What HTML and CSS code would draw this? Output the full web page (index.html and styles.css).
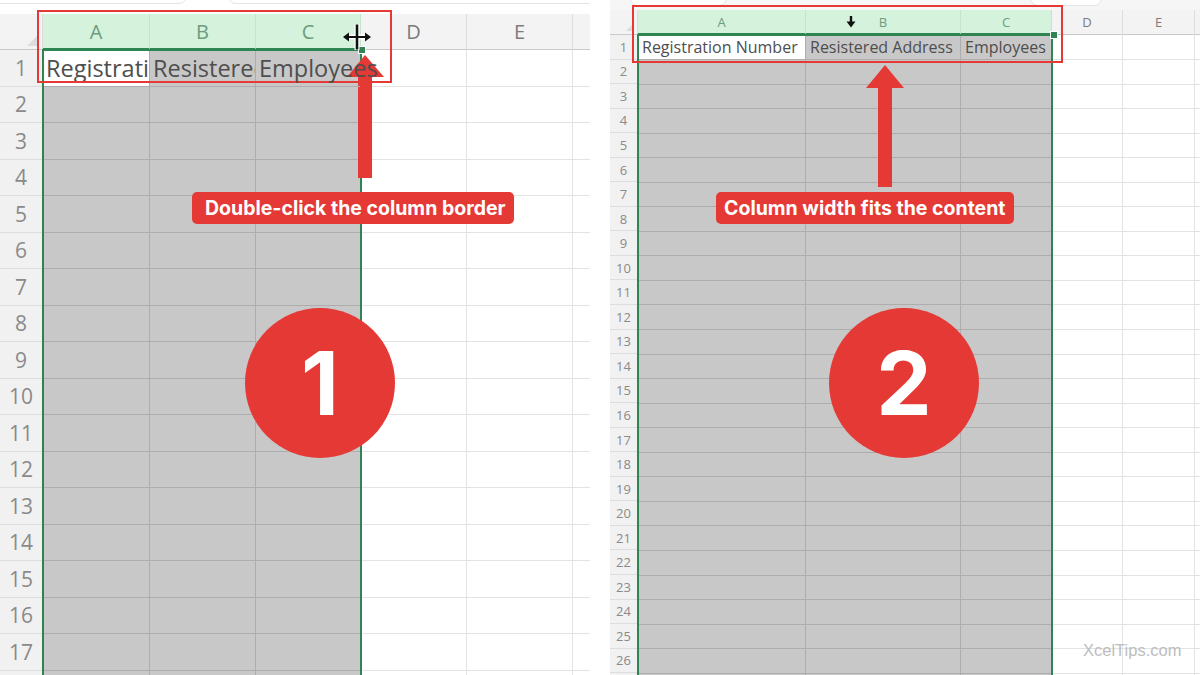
FILE: index.html
```html
<!DOCTYPE html>
<html>
<head>
<meta charset="utf-8">
<link rel="stylesheet" href="styles.css">
</head>
<body>
<div class="stage">
  <section class="panel p1">
    <div class="tabs"><span class="tab t1"></span><span class="tab t2"></span></div>
    <div class="hdr">
      <div class="corner"><span class="tri"></span></div>
      <div class="ch sel ca">A</div>
      <div class="ch sel cb">B</div>
      <div class="ch sel cc">C</div>
      <div class="ch cd">D</div>
      <div class="ch ce">E</div>
      <div class="ch cf"></div>
    </div>
    <div class="body">
      <div class="rn">
        <div>1</div><div>2</div><div>3</div><div>4</div><div>5</div><div>6</div>
        <div>7</div><div>8</div><div>9</div><div>10</div><div>11</div><div>12</div>
        <div>13</div><div>14</div><div>15</div><div>16</div><div>17</div><div>18</div>
      </div>
      <div class="grid">
        <div class="selgrp">
          <div class="col s ca"><div class="c1 active">Registration Number</div><div class="fill"></div></div>
          <div class="col s cb"><div class="c1">Resistered Address</div><div class="fill"></div></div>
          <div class="col s cc"><div class="c1 over">Employees</div><div class="fill"></div></div>
        </div>
        <div class="col cd"><div class="c1"></div><div class="fill"></div></div>
        <div class="col ce"><div class="c1"></div><div class="fill"></div></div>
        <div class="col cf"><div class="c1"></div><div class="fill"></div></div>
      </div>
    </div>

    <span class="handle h1"></span>
    <div class="redbox rb1"></div>
    <svg class="cursor-rs" width="30" height="28" viewBox="0 0 30 28">
      <g stroke="#fff" stroke-width="5" fill="#fff" stroke-linejoin="round">
        <line x1="15" y1="1" x2="15" y2="27"/>
        <line x1="4" y1="14" x2="26" y2="14"/>
      </g>
      <line x1="15" y1="1.5" x2="15" y2="26.5" stroke="#111" stroke-width="2.6"/>
      <line x1="6" y1="14" x2="24" y2="14" stroke="#111" stroke-width="2"/>
      <polygon points="1,14 7,9.5 7,18.5" fill="#111"/>
      <polygon points="29,14 23,9.5 23,18.5" fill="#111"/>
    </svg>
    <svg class="arrow ar1" width="40" height="126" viewBox="0 0 40 126">
      <polygon points="18,0 37,22 25,22 25,123 11,123 11,22 0,22" fill="#e53935"/>
    </svg>
    <div class="label lb1">Double-click the column border</div>
    <div class="badge bd1">1</div>
  </section>

  <section class="panel p2">
    <div class="tabs"><span class="tab t3"></span><span class="tab t4"></span></div>
    <div class="hdr">
      <div class="corner"><span class="tri"></span></div>
      <div class="ch sel ca">A</div>
      <div class="ch sel cb">B</div>
      <div class="ch sel cc">C</div>
      <div class="ch cd">D</div>
      <div class="ch ce">E</div>
      <div class="ch cf"></div>
    </div>
    <div class="body">
      <div class="rn">
        <div>1</div><div>2</div><div>3</div><div>4</div><div>5</div><div>6</div>
        <div>7</div><div>8</div><div>9</div><div>10</div><div>11</div><div>12</div>
        <div>13</div><div>14</div><div>15</div><div>16</div><div>17</div><div>18</div>
        <div>19</div><div>20</div><div>21</div><div>22</div><div>23</div><div>24</div>
        <div>25</div><div>26</div><div>27</div>
      </div>
      <div class="grid">
        <div class="selgrp">
          <div class="col s ca"><div class="c1 active">Registration Number</div><div class="fill"></div></div>
          <div class="col s cb"><div class="c1">Resistered Address</div><div class="fill"></div></div>
          <div class="col s cc"><div class="c1">Employees</div><div class="fill"></div></div>
        </div>
        <div class="col cd"><div class="c1"></div><div class="fill"></div></div>
        <div class="col ce"><div class="c1"></div><div class="fill"></div></div>
        <div class="col cf"><div class="c1"></div><div class="fill"></div></div>
      </div>
    </div>

    <span class="handle h2"></span>
    <div class="redbox rb2"></div>
    <svg class="cursor-dn" width="10" height="12" viewBox="0 0 10 12">
      <rect x="3.8" y="0" width="2.4" height="6.5" fill="#111"/>
      <polygon points="0.5,5.5 9.5,5.5 5,11.5" fill="#111"/>
    </svg>
    <svg class="arrow ar2" width="40" height="124" viewBox="0 0 40 124">
      <polygon points="19,0 38,23 26,23 26,122 12,122 12,23 0,23" fill="#e53935"/>
    </svg>
    <div class="label lb2">Column width fits the content</div>
    <div class="badge bd2">2</div>
    <div class="mark">XcelTips.com</div>
  </section>
</div>
</body>
</html>
```

FILE: styles.css
```css
html, body {
  margin: 0;
  padding: 0;
  background: #fff;
}
body {
  width: 1200px;
  height: 675px;
  overflow: hidden;
  font-family: "Open Sans", "Noto Sans", sans-serif;
}
.stage {
  display: flex;
  gap: 20px;
  width: 1200px;
  height: 675px;
}
.panel {
  position: relative;
  width: 590px;
  height: 675px;
  overflow: hidden;
  display: flex;
  flex-direction: column;
  flex: none;
}

/* panel metrics */
.p1 {
  --rw: 43px;
  --rh: 36.5px;
  --top: 14px;
  --hh: 36px;
  --hf: 20px;
  --cf: 23.5px;
  --nf: 21px;
}
.p2 {
  --rw: 28px;
  --rh: 24.55px;
  --top: 10px;
  --hh: 25px;
  --hf: 13px;
  --cf: 16px;
  --nf: 13px;
}
.p1 .ca { width: 107px; }
.p1 .cb { width: 106px; }
.p1 .cc { width: 105px; }
.p1 .cd { width: 106px; }
.p1 .ce { width: 106px; }
.p2 .ca { width: 168px; }
.p2 .cb { width: 155px; }
.p2 .cc { width: 91px; }
.p2 .cd { width: 71px; }
.p2 .ce { width: 72px; }
.cf { flex: 1; }

/* top tabs strip */
.tabs {
  height: var(--top);
  flex: none;
  position: relative;
}
.p2 .tabs { background: #f6f6f6; }
.tab {
  position: absolute;
  top: -14px;
  height: 16px;
  border: 1px solid #e4e4e4;
  border-radius: 8px;
  background: #fff;
}
.t1 { left: -10px; width: 195px; }
.t2 { left: 228px; width: 380px; }
.t3 { left: 20px; width: 95px; top: -12px; }
.t4 { left: 420px; width: 70px; top: -12px; }

/* column header */
.hdr {
  height: var(--hh);
  flex: none;
  display: flex;
  background: #f3f3f3;
}
.corner {
  width: var(--rw);
  flex: none;
  position: relative;
  box-sizing: border-box;
  border-bottom: 1px solid #c9c9c9;
  border-right: 1px solid #dcdcdc;
}
.tri {
  position: absolute;
  right: 3px;
  bottom: 3px;
  width: 0;
  height: 0;
  border-left: 12px solid transparent;
  border-bottom: 12px solid #dcdcdc;
}
.p2 .tri { border-left-width: 8px; border-bottom-width: 8px; }
.ch {
  flex: none;
  box-sizing: border-box;
  display: flex;
  align-items: center;
  justify-content: center;
  font-size: var(--hf);
  color: #7b7b7b;
  border-right: 1px solid #dedede;
  border-bottom: 1px solid #c9c9c9;
}
.ch.cf { flex: 1; border-right: none; }
.ch.sel {
  background: #d4f2dc;
  color: #6c9d7e;
  border-right-color: #c3e4cd;
  border-bottom: 2px solid #2f8552;
}

/* body */
.body {
  flex: 1;
  display: flex;
  min-height: 0;
}
.rn {
  width: var(--rw);
  flex: none;
  background: #f1f1f1;
  box-sizing: border-box;
  border-right: 1px solid #d6d6d6;
}
.rn div {
  height: var(--rh);
  box-sizing: border-box;
  border-bottom: 1px solid #dddddd;
  display: flex;
  align-items: center;
  justify-content: center;
  font-size: var(--nf);
  color: #8a8a8a;
}
.grid {
  flex: 1;
  display: flex;
  background: #fff;
}
.selgrp {
  display: flex;
  position: relative;
  flex: none;
}
.selgrp::after {
  content: "";
  position: absolute;
  left: -1px;
  top: -1px;
  right: -1px;
  bottom: 0;
  border: 2px solid #2f8552;
  border-bottom: none;
  pointer-events: none;
}
.col {
  --gl: #e3e3e3;
  display: flex;
  flex-direction: column;
  box-sizing: border-box;
  border-right: 1px solid var(--gl);
  flex: none;
}
.col.cf { flex: 1; border-right: none; }
.col.s {
  --gl: #adadad;
  background: #c8c8c8;
}
.c1 {
  height: var(--rh);
  flex: none;
  box-sizing: border-box;
  border-bottom: 1px solid var(--gl);
  font-size: var(--cf);
  line-height: var(--rh);
  color: #4e4e4e;
  white-space: nowrap;
  overflow: hidden;
  padding-left: 3px;
}
.p2 .c1 { padding-left: 4px; }
.c1.active { background: #fff; }
.c1.over { overflow: visible; position: relative; z-index: 1; }
.fill {
  flex: 1;
  background: repeating-linear-gradient(to bottom,
    transparent 0,
    transparent calc(var(--rh) - 1px),
    var(--gl) calc(var(--rh) - 1px),
    var(--gl) var(--rh));
}

/* overlays */
.handle {
  position: absolute;
  width: 6px;
  height: 6px;
  background: #2f8552;
  border: 1px solid #fff;
}
.h1 { left: 358px; top: 46px; }
.h2 { left: 440px; top: 31px; }

.redbox {
  position: absolute;
  border: 2.5px solid #e53935;
  box-sizing: border-box;
}
.rb1 { left: 37px; top: 10px; width: 355px; height: 73px; }
.rb2 { left: 22px; top: 5px; width: 431px; height: 58px; }

.cursor-rs { position: absolute; left: 342px; top: 23px; }
.cursor-dn { position: absolute; left: 236px; top: 16px; }

.arrow { position: absolute; }
.ar1 { left: 347px; top: 55px; }
.ar2 { left: 256px; top: 65px; }

.label {
  position: absolute;
  height: 32px;
  line-height: 32px;
  background: #e53935;
  color: #fff;
  border-radius: 5px;
  font-family: "Inter", "Liberation Sans", sans-serif;
  font-weight: 700;
  font-size: 19.5px;
  white-space: nowrap;
}
.lb1 { left: 192px; top: 192px; padding: 0 9px 0 13px; }
.lb2 { left: 106px; top: 192px; padding: 0 9px 0 8px; }

.badge {
  position: absolute;
  top: 308px;
  width: 150px;
  height: 150px;
  border-radius: 50%;
  background: #e53935;
  color: #fff;
  font-family: "Inter", "Liberation Sans", sans-serif;
  font-weight: 700;
  font-size: 88px;
  display: flex;
  align-items: center;
  justify-content: center;
}
.bd1 { left: 245px; }
.bd2 { left: 219px; }

.mark {
  position: absolute;
  left: 473px;
  top: 641px;
  font-family: "Liberation Sans", "Open Sans", sans-serif;
  font-size: 16.5px;
  color: #bdbdbd;
}
```
